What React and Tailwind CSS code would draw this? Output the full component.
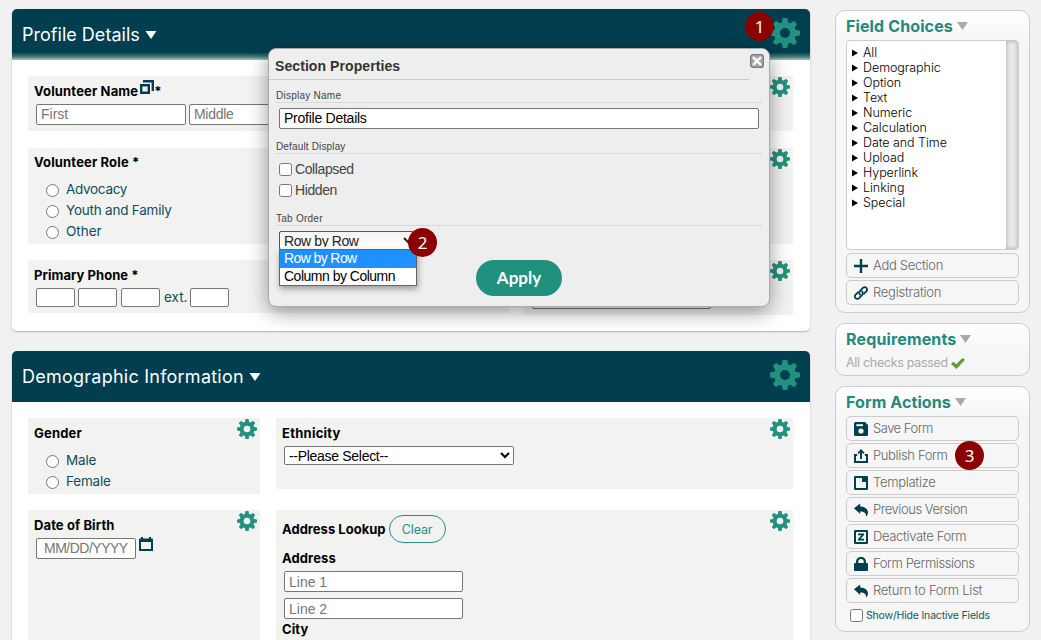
import React from "react";

const fieldChoices = [
  "All",
  "Demographic",
  "Option",
  "Text",
  "Numeric",
  "Calculation",
  "Date and Time",
  "Upload",
  "Hyperlink",
  "Linking",
  "Special",
];

function Gear({ className }) {
  return (
    <svg viewBox="0 0 30 30" className={className} fill="#23917f">
      <circle cx="15" cy="15" r="8" fill="none" stroke="#23917f" strokeWidth="6" />
      {[0, 45, 90, 135, 180, 225, 270, 315].map((angle) => (
        <path key={angle} d="M11.6 5.6 12.6 .4Q12.7 0 13.1 0H16.9Q17.3 0 17.4 .4L18.4 5.6Z" transform={`rotate(${angle} 15 15)`} />
      ))}
    </svg>
  );
}

function Badge({ children, className }) {
  return (
    <div
      className={`absolute z-20 flex h-[29px] w-[29px] items-center justify-center rounded-full bg-[#8b0000] pb-px font-['Noto_Sans',sans-serif] text-[17px] leading-none text-white ${className}`}
    >
      {children}
    </div>
  );
}

function SectionHeader({ title, className, titleClass }) {
  return (
    <div className={`flex h-[51px] items-center justify-between rounded-t-[5px] pr-[10px] pl-[10px] ${className}`}>
      <h2 className="flex items-center text-[18px] text-white">
        <span className={titleClass}>{title}</span>
        <svg viewBox="0 0 12 8" className="mt-px ml-[5px] h-2 w-3" fill="#fff">
          <path d="M.5 0h11L6 8z" />
        </svg>
      </h2>
      <Gear className="mb-[3px] h-[30px] w-[30px]" />
    </div>
  );
}

function Field({ label, className, gear = true, children }) {
  return (
    <div className={`flex items-start justify-between bg-[#f2f2f1] pr-[3px] pl-[6px] ${className}`}>
      <div className="pt-[7px]">
        <div className="h-[17px] text-[13px] leading-[17px] font-bold whitespace-nowrap text-black">{label}</div>
        {children}
      </div>
      {gear && <Gear className="mt-px h-5 w-5 shrink-0" />}
    </div>
  );
}

function TextInput({ className, ...props }) {
  return (
    <input
      type="text"
      className={`block rounded-[2px] border border-[#767676] bg-white px-1 font-['Liberation_Sans',Arial,sans-serif] text-[14px] text-black placeholder:text-[#757575] ${className}`}
      {...props}
    />
  );
}

function Radio({ label, name, textClass }) {
  return (
    <label className="flex h-[21px] items-center text-[13.5px] text-[#0e4f5d]">
      <input type="radio" name={name} className="mt-[2px] mr-[7px] ml-3 h-[13px] w-[13px]" />
      <span className={textClass}>{label}</span>
    </label>
  );
}

function Panel({ title, titleClass, className, children }) {
  return (
    <section
      className={`rounded-[10px] border border-[#ccc] bg-linear-to-b from-white to-[#f6f6f6] to-[30px] px-[10px] pt-[5px] ${className}`}
    >
      <h3 className="flex h-[20px] items-center text-[16px] font-bold text-[#23897d]">
        <span className={titleClass}>{title}</span>
        <svg viewBox="0 0 11 8" className="ml-1 h-2 w-[11px]" fill="#aaa">
          <path d="M0 0h11L5.5 8z" />
        </svg>
      </h3>
      {children}
    </section>
  );
}

function SideButton({ icon, label, textClass }) {
  return (
    <button className="flex h-[25px] w-[173px] items-center rounded-[5px] border border-[#ccc] pl-[7px] text-[13px] font-light text-[#666]">
      <svg viewBox="0 0 14 14" className="h-[14px] w-[14px]" fill="#003e50">
        {icon}
      </svg>
      <span className={`mt-px ml-[5px] ${textClass}`}>{label}</span>
    </button>
  );
}

const plusIcon = <path d="M5.8 0h2.4v5.8H14v2.4H8.2V14H5.8V8.2H0V5.8h5.8z" />;
const linkIcon = (
  <g fill="none" stroke="#003e50" strokeWidth="1.8" strokeLinecap="round">
    <path d="M6 8.6a2.6 2.6 0 0 1 0-3.7L8.9 1.8a2.4 2.4 0 0 1 3.5 3.5L10 7.7" />
    <path d="M8 5.4a2.6 2.6 0 0 1 0 3.7l-2.9 3.1a2.4 2.4 0 0 1-3.5-3.5L4 6.3" />
  </g>
);
const saveIcon = (
  <>
    <path d="M1.5 0H11l3 3v9.500Q14 14 12.500 14H1.500Q0 14 0 12.500V1.500Q0 0 1.500 0z" />
    <path d="M2.300 2.200H9v2H2.300z" fill="#f6f6f6" />
    <circle cx="7" cy="9" r="2.600" fill="#f6f6f6" />
  </>
);
const publishIcon = (
  <>
    <path d="M0 5h3.200v2H2v4.900h10V7h-1.200V5H14v9H0z" />
    <path d="M6 10V3.600L4.600 5 3.400 3.800 7 .1l3.600 3.700L9.400 5 8 3.600V10z" />
  </>
);
const templateIcon = (
  <>
    <rect width="14" height="14" rx="1.300" />
    <path d="M2 2h6v4h4v6H2z" fill="#f6f6f6" />
  </>
);
const replyIcon = <path d="M0 5.300 6.200.4v3C11 3.600 14 6 14 9.500c0 1.600-.8 3-2 4 .3-3-1.300-5-5.800-5v2.600z" />;
const deactivateIcon = (
  <>
    <rect width="14" height="14" rx="1.300" />
    <path d="M2 2h10v10H2z" fill="#f6f6f6" />
    <path d="M4 3.600h6v1.500L6.500 8.800H10v1.600H4V8.900l3.500-3.700H4z" />
  </>
);
const lockIcon = (
  <path
    fillRule="evenodd"
    d="M2 6V4.800a5 5 0 0 1 10 0V6h1q1 0 1 1v6q0 1-1 1H1q-1 0-1-1V7q0-1 1-1zM4.300 6h5.400V4.800a2.700 2.700 0 0 0-5.400 0z"
  />
);

const formActions = [
  { label: "Save Form", icon: saveIcon, textClass: "tracking-[-0.5px]" },
  { label: "Publish Form", icon: publishIcon, textClass: "tracking-[-0.35px]" },
  { label: "Templatize", icon: templateIcon, textClass: "tracking-[-0.3px]" },
  { label: "Previous Version", icon: replyIcon, textClass: "tracking-[-0.45px]" },
  { label: "Deactivate Form", icon: deactivateIcon, textClass: "tracking-[-0.35px]" },
  { label: "Form Permissions", icon: lockIcon, textClass: "tracking-[-0.4px]" },
  { label: "Return to Form List", icon: replyIcon, textClass: "tracking-[-0.25px]" },
];

function SectionModal() {
  const groupLabel =
    "mx-[7px] border-b border-[#d8d8d8] font-['Liberation_Sans',Arial,sans-serif] text-[10px] leading-[12px] text-[#444]";
  return (
    <div className="absolute top-[48px] left-[268px] z-10 h-[259px] w-[502px] rounded-[8px] border border-[#aaa] bg-[#eee] font-['Liberation_Sans',Arial,sans-serif] text-[#444] shadow-[0_5px_20px_rgba(0,0,0,0.4)]">
      <div className="flex justify-between">
        <div className="h-[31px] w-[480px] border-b border-[#c8c8c8] pt-[9px] pl-[6px] text-[14px] leading-[16px] font-bold tracking-[0.08px] text-[#333]">
          Section Properties
        </div>
        <svg viewBox="0 0 14 14" className="mt-[5px] mr-[5px] h-[14px] w-[14px]">
          <rect x=".6" y=".6" width="12.800" height="12.800" rx="2.500" fill="#aaa" stroke="#777" strokeWidth="1.200" />
          <path d="m3 3 8 8m0-8-8 8" stroke="#fff" strokeWidth="2.300" />
        </svg>
      </div>
      <div className={`mt-[10px] tracking-[0.25px] ${groupLabel}`}>Display Name</div>
      <TextInput defaultValue="Profile Details" className="mt-[5px] ml-[10px] h-[21px] w-[480px] tracking-[-0.25px]" />
      <div className={`mt-[12px] tracking-[0.15px] ${groupLabel}`}>Default Display</div>
      <div className="flex flex-col pt-[5px] pl-[10px] text-[14px]">
        <label className="flex h-[21px] items-center">
          <input type="checkbox" className="mr-[3px] h-[13px] w-[13px]" />
          <span className="tracking-[-0.4px]">Collapsed</span>
        </label>
        <label className="flex h-[21px] items-center">
          <input type="checkbox" className="mr-[3px] h-[13px] w-[13px]" />
          <span className="tracking-[-0.4px]">Hidden</span>
        </label>
      </div>
      <div className={`mt-[12px] tracking-[0.25px] ${groupLabel}`}>Tab Order</div>
      <div className="relative mt-[5px] ml-[10px] w-[138px] text-[14px]">
        <select className="block h-[19px] w-[138px] rounded-[2px] border border-[#555] bg-linear-to-b from-[#f3f3f3] to-white px-0 pb-[2px] text-[14px] leading-[15px] tracking-[-0.4px] text-[#222]">
          <option>Row by Row</option>
        </select>
        <div className="absolute top-[18px] left-0 w-[138px] border border-[#666] bg-white leading-[16px] text-black shadow-[1px_3px_6px_rgba(0,0,0,0.35)]">
          <div className="h-[18px] bg-[#1e90ff] pl-1 tracking-[-0.6px] text-white">Row by Row</div>
          <div className="h-[17px] pl-1 tracking-[-0.5px]">Column by Column</div>
        </div>
      </div>
      <button className="mt-[10px] ml-[207px] block h-[36px] w-[86px] rounded-full bg-[#20907f] font-['Lato',sans-serif] text-[17px] font-bold text-white">
        Apply
      </button>
    </div>
  );
}

export default function App() {
  return (
    <div className="relative flex h-[640px] w-[1041px] justify-between overflow-hidden bg-[#f1f1f1] pt-[9px] pr-[11px] pl-3 font-['Inter',sans-serif]">
      <main className="flex w-[798px] shrink-0 flex-col gap-5">
        <section className="h-[322px] shrink-0 rounded-[5px] bg-white shadow-[0_1px_2px_rgba(0,0,0,0.25)]">
          <SectionHeader
            title="Profile Details"
            titleClass="tracking-[0.02px]"
            className="bg-linear-to-b from-[#003e50] from-85% via-[#3f7778] via-93% to-[#a6c8ad]"
          />
          <div className="flex flex-col px-4 pt-4">
            <Field
              className="h-[55px] w-[765px]"
              label={
                <span className="flex">
                  <span className="tracking-[0.15px]">Volunteer Name</span>
                  <svg viewBox="0 0 14 14" className="mt-[-3px] ml-[2px] h-[14px] w-[14px]" fill="none" stroke="#003e50" strokeWidth="2.400">
                    <path d="M1.200 5.200h7.600v7.600H1.200zM3 1.200h9.800V11" />
                  </svg>
                  <span>*</span>
                </span>
              }
            >
              <div className="mt-[4px] ml-[2px] flex gap-[3px]">
                <TextInput placeholder="First" className="h-[21px] w-[150px]" />
                <TextInput placeholder="Middle" className="h-[21px] w-[150px] tracking-[-0.3px]" />
              </div>
            </Field>
            <Field className="mt-[17px] h-[96px] w-[765px]" label={<span className="relative -top-px tracking-[0.15px]">Volunteer Role *</span>}>
              <div className="mt-[7px] flex flex-col">
                <Radio name="role" label="Advocacy" textClass="tracking-[-0.3px]" />
                <Radio name="role" label="Youth and Family" textClass="tracking-[-0.22px]" />
                <Radio name="role" label="Other" textClass="" />
              </div>
            </Field>
            <div className="mt-4 flex items-start gap-[15px]">
              <Field className="h-[53px] w-[481px]" gear={false} label={<span className="tracking-[0.05px]">Primary Phone *</span>}>
                <div className="mt-[4px] ml-[2px] flex items-center text-[13.5px] text-[#0e4f5d]">
                  <TextInput className="h-[19px] w-[39px]" />
                  <TextInput className="ml-[3px] h-[19px] w-[39px]" />
                  <TextInput className="ml-[4px] h-[19px] w-[39px]" />
                  <span className="mr-1 ml-1 w-[22px] leading-[19px]">ext.</span>
                  <TextInput className="h-[19px] w-[39px]" />
                </div>
              </Field>
              <Field className="h-[55px] w-[269px]">
                <TextInput className="mt-[4px] ml-[2px] h-[21px] w-[179px]" />
              </Field>
            </div>
          </div>
        </section>

        <section className="h-[400px] shrink-0 rounded-[5px] bg-white shadow-[0_1px_2px_rgba(0,0,0,0.25)]">
          <SectionHeader title="Demographic Information" titleClass="tracking-[0.24px]" className="bg-[#003e50]" />
          <div className="flex items-start gap-4 px-4 pt-4">
            <div className="flex w-[232px] flex-col gap-4">
              <Field className="h-[76px]" label={<span className="tracking-[0.2px]">Gender</span>}>
                <div className="mt-[8px] flex flex-col">
                  <Radio name="gender" label="Male" textClass="tracking-[-0.2px]" />
                  <Radio name="gender" label="Female" textClass="tracking-[-0.2px]" />
                </div>
              </Field>
              <Field className="h-[200px]" label={<span className="tracking-[0.1px]">Date of Birth</span>}>
                <div className="mt-[4px] ml-[2px] flex gap-[3px]">
                  <TextInput placeholder="MM/DD/YYYY" className="h-[21px] w-[100px] pl-[7px] tracking-[-0.5px]" />
                  <svg viewBox="0 0 14 14" className="mt-[-1px] h-[14px] w-[14px]" fill="#003e50">
                    <path
                      fillRule="evenodd"
                      d="M0 2.500Q0 1.500 1 1.500h1V0h2v1.500h6V0h2v1.500h1q1 0 1 1V14H0zM2 5v7h10V5z"
                    />
                  </svg>
                </div>
              </Field>
            </div>
            <div className="flex w-[517px] flex-col gap-[21px]">
              <Field className="h-[71px]" label={<span className="tracking-[0.25px]">Ethnicity</span>}>
                <select className="mt-[4px] ml-[2px] block h-[19px] w-[230px] rounded-[2px] border border-[#767676] bg-white pb-[2px] font-['Liberation_Sans',Arial,sans-serif] text-[14px] leading-[15px] tracking-[-0.3px] text-black">
                  <option>--Please Select--</option>
                </select>
              </Field>
              <div className="flex h-[200px] items-start justify-between bg-[#f2f2f1] pr-[3px] pl-[6px] text-[13px] leading-[17px] font-bold text-black">
                <div className="pt-[5px]">
                  <div className="flex h-[28px] items-center gap-[3px]">
                    <span className="tracking-[0.02px]">Address Lookup</span>
                    <button className="h-[28px] w-[57px] rounded-full border border-[#23917f] text-[12.5px] font-normal tracking-[-0.1px] text-[#23917f]">
                      Clear
                    </button>
                  </div>
                  <div className="mt-[7px] tracking-[0.1px]">Address</div>
                  <TextInput placeholder="Line 1" className="mt-[4px] ml-[2px] h-[21px] w-[179px] font-normal" />
                  <TextInput placeholder="Line 2" className="mt-[6px] ml-[2px] h-[21px] w-[179px] font-normal" />
                  <div className="mt-[2px] tracking-[0.1px]">City</div>
                </div>
                <Gear className="mt-px h-5 w-5 shrink-0" />
              </div>
            </div>
          </div>
        </section>
      </main>

      <aside className="flex w-[195px] shrink-0 flex-col gap-[10px] pt-px">
        <Panel title="Field Choices" titleClass="tracking-[0.12px]" className="h-[303px]">
          <div className="mt-[4px] flex h-[210px] w-[173px] overflow-hidden rounded-[4px] border border-[#ccc] bg-white">
            <ul className="flex-1 pt-[4px] pl-[5px] text-[12.5px] leading-[15px] text-black">
              {fieldChoices.map((choice) => (
                <li key={choice} className="flex h-[15px] items-center gap-[5px] font-light">
                  <svg viewBox="0 0 6 8" className="h-2 w-[6px]">
                    <path d="M0 0.500v7L6 4z" />
                  </svg>
                  <span className="tracking-[-0.05px]">{choice}</span>
                </li>
              ))}
            </ul>
            <div className="w-[12px] bg-[#e8e8e8] shadow-[inset_0_0_4px_rgba(0,0,0,0.3)]" />
          </div>
          <div className="mt-[3px] flex flex-col gap-[2px]">
            <SideButton icon={plusIcon} label="Add Section" textClass="tracking-[-0.3px]" />
            <SideButton icon={linkIcon} label="Registration" textClass="tracking-[-0.25px]" />
          </div>
        </Panel>
        <Panel title="Requirements" titleClass="tracking-[0.15px]" className="h-[53px]">
          <div className="mt-[5px] flex items-center text-[12.5px] leading-[18px] text-[#aaa]">
            <span className="tracking-[-0.3px]">All checks passed</span>
            <svg viewBox="0 0 14 11" className="ml-[3px] h-[11px] w-[14px]" fill="#629b36">
              <path d="m0 6 2.300-2.300 3 2.600L11.500 0 14 1.800 5.500 11z" />
            </svg>
          </div>
        </Panel>
        <Panel title="Form Actions" titleClass="tracking-[0.1px]" className="h-[246px]">
          <div className="mt-[4px] flex flex-col gap-[2px]">
            {formActions.map((action) => (
              <SideButton key={action.label} {...action} />
            ))}
          </div>
          <label className="mt-[4px] flex h-[17px] items-center text-[10.5px] text-[#0e5a66]">
            <input type="checkbox" className="mr-[3px] ml-1 h-[13px] w-[13px]" />
            <span className="tracking-[-0.18px] whitespace-nowrap">Show/Hide Inactive Fields</span>
          </label>
        </Panel>
      </aside>

      <SectionModal />
      <Badge className="top-[12px] left-[745px]">1</Badge>
      <Badge className="top-[228px] left-[408px]">2</Badge>
      <Badge className="top-[441px] left-[955px]">3</Badge>
    </div>
  );
}
